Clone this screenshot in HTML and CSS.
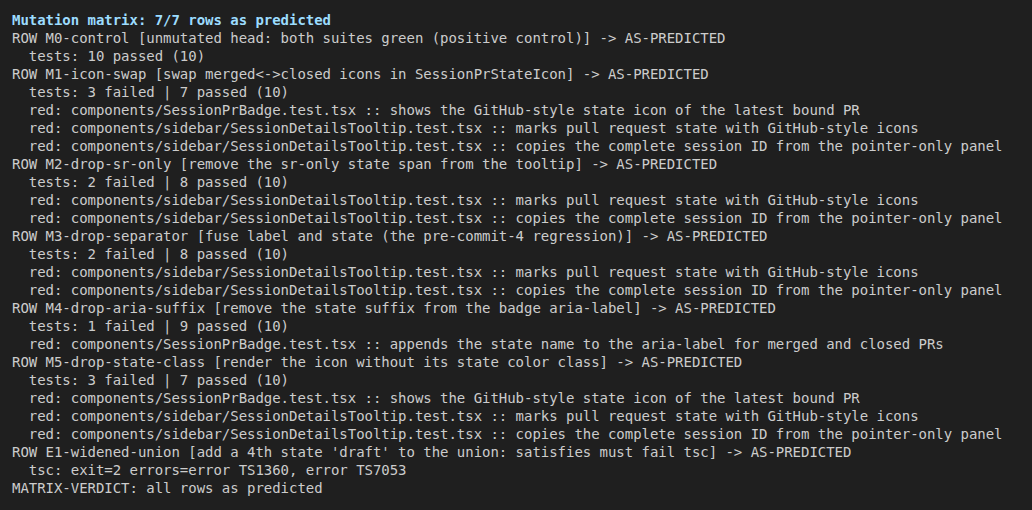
FILE: index.html
```html
<!DOCTYPE html>
<html>
<head>
<meta charset="utf-8">
<link rel="stylesheet" href="styles.css">
</head>
<body>
<pre class="term"><span class="head">Mutation matrix: 7/7 rows as predicted</span>
ROW M0-control [unmutated head: both suites green (positive control)] -&gt; AS-PREDICTED
  tests: 10 passed (10)
ROW M1-icon-swap [swap merged&lt;-&gt;closed icons in SessionPrStateIcon] -&gt; AS-PREDICTED
  tests: 3 failed | 7 passed (10)
  red: components/SessionPrBadge.test.tsx :: shows the GitHub-style state icon of the latest bound PR
  red: components/sidebar/SessionDetailsTooltip.test.tsx :: marks pull request state with GitHub-style icons
  red: components/sidebar/SessionDetailsTooltip.test.tsx :: copies the complete session ID from the pointer-only panel
ROW M2-drop-sr-only [remove the sr-only state span from the tooltip] -&gt; AS-PREDICTED
  tests: 2 failed | 8 passed (10)
  red: components/sidebar/SessionDetailsTooltip.test.tsx :: marks pull request state with GitHub-style icons
  red: components/sidebar/SessionDetailsTooltip.test.tsx :: copies the complete session ID from the pointer-only panel
ROW M3-drop-separator [fuse label and state (the pre-commit-4 regression)] -&gt; AS-PREDICTED
  tests: 2 failed | 8 passed (10)
  red: components/sidebar/SessionDetailsTooltip.test.tsx :: marks pull request state with GitHub-style icons
  red: components/sidebar/SessionDetailsTooltip.test.tsx :: copies the complete session ID from the pointer-only panel
ROW M4-drop-aria-suffix [remove the state suffix from the badge aria-label] -&gt; AS-PREDICTED
  tests: 1 failed | 9 passed (10)
  red: components/SessionPrBadge.test.tsx :: appends the state name to the aria-label for merged and closed PRs
ROW M5-drop-state-class [render the icon without its state color class] -&gt; AS-PREDICTED
  tests: 3 failed | 7 passed (10)
  red: components/SessionPrBadge.test.tsx :: shows the GitHub-style state icon of the latest bound PR
  red: components/sidebar/SessionDetailsTooltip.test.tsx :: marks pull request state with GitHub-style icons
  red: components/sidebar/SessionDetailsTooltip.test.tsx :: copies the complete session ID from the pointer-only panel
ROW E1-widened-union [add a 4th state 'draft' to the union: satisfies must fail tsc] -&gt; AS-PREDICTED
  tsc: exit=2 errors=error TS1360, error TS7053
MATRIX-VERDICT: all rows as predicted</pre>
</body>
</html>
```
FILE: styles.css
```css
html, body {
  margin: 0;
  padding: 0;
  background: #1f1f1f;
  height: 100%;
}
.term {
  margin: 0;
  padding: 11px 12px 10px;
  font-family: "DejaVu Sans Mono", monospace;
  font-size: 14px;
  line-height: 18px;
  letter-spacing: -0.035px;
  color: #cccccc;
  white-space: pre;
}
.head {
  color: #9cdcfe;
  font-weight: bold;
}
```
